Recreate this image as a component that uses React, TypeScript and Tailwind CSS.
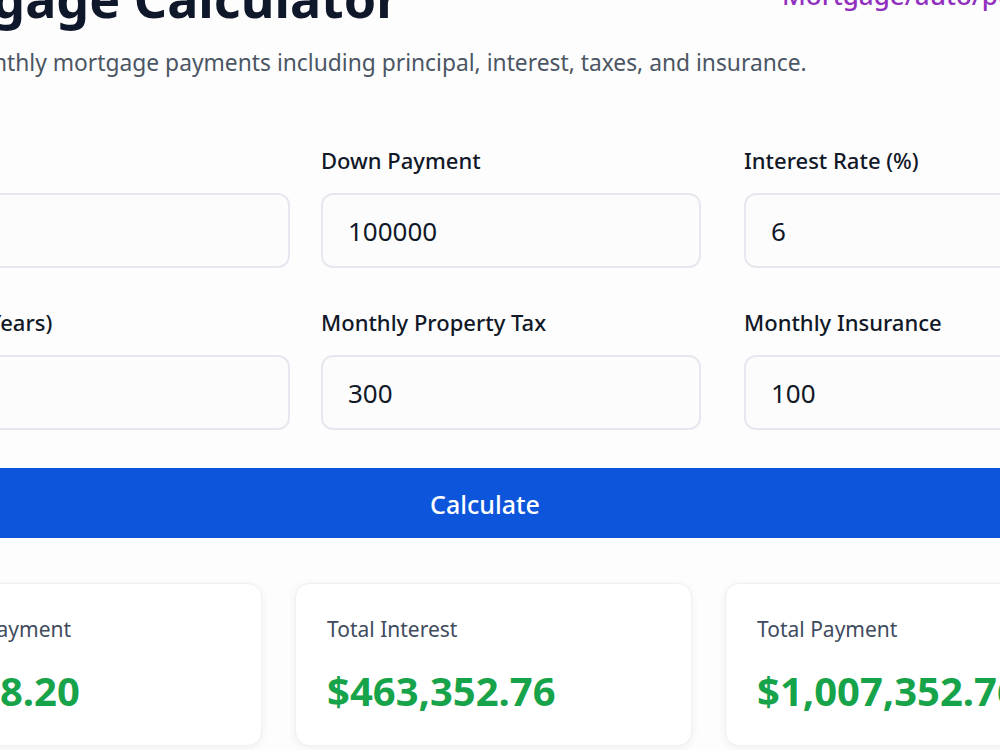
import React, { useState } from 'react';

type Field = { key: string; label: string; value: string };

const initialFields: Field[] = [
  { key: 'price', label: 'Home Price', value: '500000' },
  { key: 'down', label: 'Down Payment', value: '100000' },
  { key: 'rate', label: 'Interest Rate (%)', value: '6' },
  { key: 'term', label: 'Loan Term (Years)', value: '30' },
  { key: 'tax', label: 'Monthly Property Tax', value: '300' },
  { key: 'insurance', label: 'Monthly Insurance', value: '100' },
];

const money = (n: number) =>
  '$' + n.toLocaleString('en-US', { minimumFractionDigits: 2, maximumFractionDigits: 2 });

function compute(values: Record<string, number>) {
  const principal = values.price - values.down;
  const r = values.rate / 100 / 12;
  const n = values.term * 12;
  const pi = r === 0 ? principal / n : (principal * r) / (1 - Math.pow(1 + r, -n));
  const monthly = pi + values.tax + values.insurance;
  const totalInterest = pi * n - principal;
  const totalPayment = monthly * n;
  return { monthly, totalInterest, totalPayment };
}

const InputField: React.FC<{ field: Field; onChange: (v: string) => void }> = ({ field, onChange }) => (
  <div className="flex flex-col">
    <label className="text-[22px] leading-[28px] font-medium text-[#111827]">{field.label}</label>
    <input
      type="text"
      value={field.value}
      onChange={(e) => onChange(e.target.value)}
      className="mt-[19px] h-[75px] w-full rounded-[12px] border-2 border-[#e6e8ef] bg-[#fcfcfd] px-[25px] text-[26px] text-[#111827] outline-none"
    />
  </div>
);

const ResultCard: React.FC<{ label: string; value: string }> = ({ label, value }) => (
  <div className="h-[163px] rounded-[14px] border border-[#eef0f3] bg-white px-[31px] pt-[31px] shadow-[0_2px_8px_rgba(15,23,42,0.06)]">
    <p className="text-[21px] leading-[28px] text-[#3f4b5e]">{label}</p>
    <p className="mt-[24px] text-[40px] leading-[48px] font-bold text-[#16a34a]">{value}</p>
  </div>
);

export default function App() {
  const [fields, setFields] = useState<Field[]>(initialFields);
  const [results, setResults] = useState(() =>
    compute(Object.fromEntries(initialFields.map((f) => [f.key, parseFloat(f.value)])))
  );

  const update = (key: string, v: string) =>
    setFields((prev) => prev.map((f) => (f.key === key ? { ...f, value: v } : f)));

  const handleCalculate = () => {
    const vals = Object.fromEntries(fields.map((f) => [f.key, parseFloat(f.value) || 0]));
    setResults(compute(vals));
  };

  const row1 = fields.slice(0, 3);
  const row2 = fields.slice(3);

  return (
    <div className="h-[750px] w-full overflow-hidden bg-[#fdfdfd] font-['Noto_Sans',sans-serif]">
      <div className="ml-[-135px] mt-[-28px] w-[1257px]">
        <div className="flex items-start">
          <h1 className="text-[52px] leading-none font-bold text-[#0f172a] whitespace-nowrap">Mortgage Calculator</h1>
          <a className="ml-auto mt-[10px] w-[340px] whitespace-nowrap text-[26px] leading-none font-medium text-[#9130bf]">
            Mortgage/auto/personal
          </a>
        </div>
        <p className="ml-[-11px] mt-[23px] text-[22.8px] leading-[32px] text-[#4b5563] whitespace-nowrap">
          Calculate monthly mortgage payments including principal, interest, taxes, and insurance.
        </p>

        <div className="mt-[67px] flex flex-col gap-y-[40px]">
          {[row1, row2].map((row, i) => (
            <div key={i} className="flex">
              <div className="w-[425px]">
                <InputField field={row[0]} onChange={(v) => update(row[0].key, v)} />
              </div>
              <div className="ml-[31px] w-[380px]">
                <InputField field={row[1]} onChange={(v) => update(row[1].key, v)} />
              </div>
              <div className="ml-[43px] flex-1">
                <InputField field={row[2]} onChange={(v) => update(row[2].key, v)} />
              </div>
            </div>
          ))}
        </div>

        <button
          onClick={handleCalculate}
          className="mt-[38px] h-[70px] w-full rounded-[6px] bg-[#0d55db] pr-[17px] pt-[3px] text-[25px] font-medium text-white"
        >
          Calculate
        </button>

        <div className="mt-[45px] grid grid-cols-3 gap-[33px]">
          <ResultCard label="Monthly Payment" value={money(results.monthly)} />
          <ResultCard label="Total Interest" value={money(results.totalInterest)} />
          <ResultCard label="Total Payment" value={money(results.totalPayment)} />
        </div>
      </div>
    </div>
  );
}
